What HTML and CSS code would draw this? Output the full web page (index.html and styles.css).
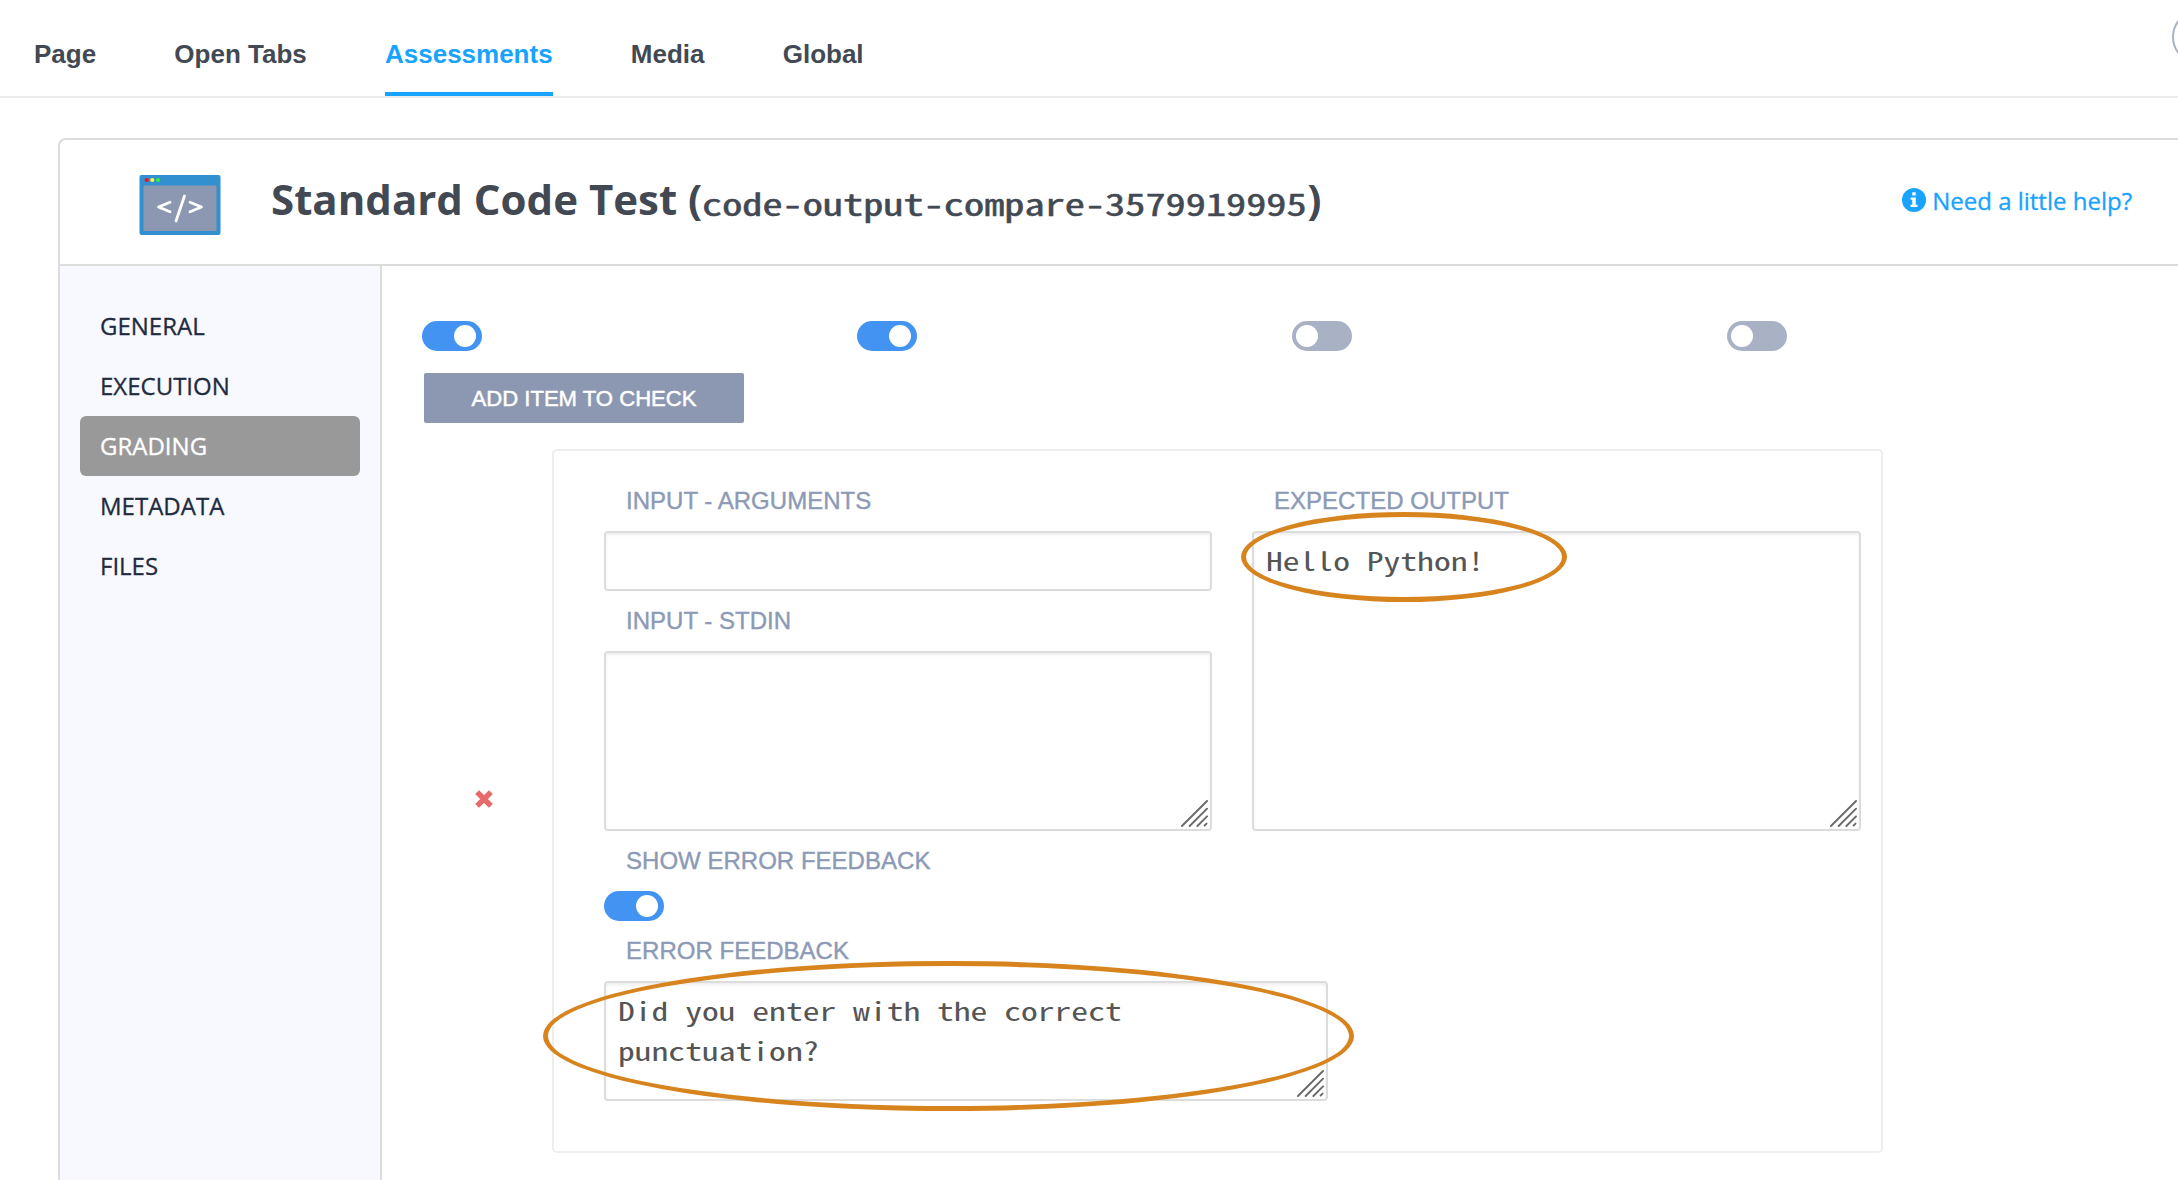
FILE: index.html
```html
<!DOCTYPE html>
<html lang="en">
<head>
<meta charset="utf-8">
<title>Assessments</title>
<link rel="stylesheet" href="styles.css">
</head>
<body>
<svg class="defs" aria-hidden="true">
  <symbol id="grip" viewBox="0 0 28 28">
    <path d="M1 27 27 1M9 27 27 9M17 27 27 17M24.5 26.5 26.5 24.5" fill="none" stroke="#6b6b6b" stroke-width="2" stroke-linecap="round"/>
  </symbol>
</svg>
<nav class="tabs">
  <a class="tab">Page</a>
  <a class="tab">Open Tabs</a>
  <a class="tab tab-active">Assessments</a>
  <a class="tab">Media</a>
  <a class="tab">Global</a>
  <span class="round-button"></span>
</nav>
<main class="card">
  <header class="card-header">
    <svg class="code-icon" viewBox="0 0 82 60">
      <rect x=".5" width="81" height="60" rx="2" fill="#3390d0"/>
      <rect x="4.500" y="10.500" width="73" height="45.500" fill="#8c97b1"/>
      <circle cx="7.700" cy="5" r="2.100" fill="#f01020"/>
      <circle cx="13.300" cy="5" r="2.100" fill="#fbf33c"/>
      <circle cx="19" cy="5" r="2.100" fill="#2cf23c"/>
      <path d="M31 27.200 19.500 32 31 36.800M51 27.200 62.500 32 51 36.800M45.500 21 37 46" fill="none" stroke="#fff" stroke-width="2.800" stroke-linecap="round" stroke-linejoin="round"/>
    </svg>
    <h1 class="title">Standard Code Test (<span class="title-id">code-output-compare-3579919995</span>)</h1>
    <a class="help">
      <svg class="help-icon" viewBox="0 0 24 24">
        <circle cx="12" cy="12" r="12" fill="#18a3fe"/>
        <path d="M10.300 4.200h3.400v3.200h-3.400zM8.600 9.400h5.200v7.400h1.700v2.300H8.600v-2.300h1.700v-5.100H8.600z" fill="#fff"/>
      </svg>
      <span class="help-text">Need a little help?</span>
    </a>
  </header>
  <div class="card-body">
    <aside class="sidebar">
      <a class="side-item">GENERAL</a>
      <a class="side-item">EXECUTION</a>
      <a class="side-item side-active">GRADING</a>
      <a class="side-item">METADATA</a>
      <a class="side-item">FILES</a>
    </aside>
    <section class="content">
      <div class="switches">
        <span class="switch switch-on"></span>
        <span class="switch switch-on"></span>
        <span class="switch"></span>
        <span class="switch"></span>
      </div>
      <button class="add-button"><span class="add-label">ADD ITEM TO CHECK</span></button>
      <div class="check-row">
        <svg class="remove" viewBox="0 0 18 18"><path d="M4 4 14 14M14 4 4 14" stroke="#ea6a6a" stroke-width="5.400" stroke-linecap="square"/></svg>
        <div class="panel">
          <div class="columns">
            <div class="column">
              <div class="label"><span>INPUT - ARGUMENTS</span></div>
              <div class="field field-line"></div>
              <div class="label"><span>INPUT - STDIN</span></div>
              <div class="field field-stdin"><svg class="grip"><use href="#grip"/></svg></div>
            </div>
            <div class="column">
              <div class="label"><span>EXPECTED OUTPUT</span></div>
              <div class="field field-output"><span class="code">Hello Python!</span><svg class="grip"><use href="#grip"/></svg></div>
            </div>
          </div>
          <div class="label"><span>SHOW ERROR FEEDBACK</span></div>
          <span class="switch switch-on"></span>
          <div class="label"><span>ERROR FEEDBACK</span></div>
          <div class="field field-feedback"><span class="code">Did you enter with the correct</span><span class="code">punctuation?</span><svg class="grip"><use href="#grip"/></svg></div>
          <span class="ring ring-output"></span>
          <span class="ring ring-feedback"></span>
        </div>
      </div>
    </section>
  </div>
</main>
</body>
</html>
```
FILE: styles.css
```css
* { box-sizing: border-box; }
body {
  margin: 0;
  height: 1180px;
  overflow: hidden;
  background: #fff;
  font-family: "Open Sans", sans-serif;
  color: #424953;
}
.defs { display: none; }
.tabs {
  position: relative;
  display: flex;
  gap: 78.200px;
  height: 98px;
  padding-left: 34px;
  border-bottom: 2px solid #ececec;
  font: bold 26px/30px "Liberation Sans", Arial, sans-serif;
  overflow: hidden;
}
.tab { height: 96px; padding-top: 39px; white-space: nowrap; }
.tab-active { color: #18a3fe; border-bottom: 4px solid #18a3fe; }
.round-button {
  position: absolute;
  left: 2172px;
  top: 10px;
  width: 54px;
  height: 54px;
  border: 2px solid #a9b1c8;
  border-radius: 50%;
}
.card {
  margin: 40px 0 0 58px;
  height: 1100px;
  border: 2px solid #dcdcdc;
  border-right: 0;
  border-radius: 8px 0 0 0;
}
.card-header {
  display: flex;
  align-items: flex-start;
  height: 126px;
  padding: 35px 46px 0 79px;
  border-bottom: 2px solid #dcdcdc;
}
.code-icon { width: 82px; height: 60px; flex: none; }
.title {
  margin: -6px 0 0 50px;
  font-size: 42px;
  line-height: 60px;
  font-weight: 700;
  white-space: nowrap;
}
.title-id {
  display: inline-block;
  width: 605px;
  font-family: "Noto Sans Mono CJK SC", "DejaVu Sans Mono", monospace;
  font-weight: 400;
  font-size: 30.240px;
  line-height: 40px;
  transform: translateY(1px) scaleX(1.3333);
  transform-origin: 0 50%;
  -webkit-text-stroke: .5px currentColor;
}
.help { display: flex; margin-left: auto; margin-top: 13px; color: #18a3fe; }
.help-icon { width: 24px; height: 24px; }
.help-text {
  margin: -5px 0 0 6px;
  font-size: 24px;
  line-height: 36px;
  white-space: nowrap;
  -webkit-text-stroke: .3px currentColor;
}
.card-body { display: flex; height: 914px; }
.sidebar {
  width: 322px;
  padding: 30px 20px 0;
  background: #f8f9fe;
  border-right: 2px solid #dcdcdc;
}
.side-item {
  display: block;
  height: 60px;
  padding-left: 20px;
  border-radius: 6px;
  font-size: 24px;
  line-height: 60px;
  color: #1f2b40;
  -webkit-text-stroke: .3px currentColor;
}
.side-active { background: #999; color: #fff; }
.content { flex: 1; padding: 55px 0 0 40px; }
.switches { display: flex; gap: 375px; }
.switch {
  display: block;
  flex: none;
  width: 60px;
  height: 30px;
  padding: 4px;
  border-radius: 15px;
  background: #a9b1c5;
}
.switch::before {
  content: "";
  display: block;
  width: 22px;
  height: 22px;
  border-radius: 50%;
  background: #fff;
}
.switch-on { background: #4394f2; padding-left: 32px; }
.add-button {
  display: block;
  width: 320px;
  height: 50px;
  margin: 22px 0 26px 2px;
  padding: 1px 0 0;
  border: 0;
  border-radius: 2px;
  background: #8c97b1;
  color: #fff;
  font: 22.100px/50px "Liberation Sans", Arial, sans-serif;
  -webkit-text-stroke: .5px currentColor;
}
.check-row { display: flex; align-items: center; }
.remove { width: 18px; height: 18px; margin: 0 59px 0 53px; position: relative; top: -2px; }
.panel {
  position: relative;
  width: 1331px;
  height: 704px;
  padding: 20px 20px 0 50px;
  border: 2px solid #eee;
  border-radius: 5px;
}
.columns { display: flex; justify-content: space-between; }
.column { width: 608px; }
.column + .column { width: 609px; }
.label {
  height: 60px;
  padding-left: 22px;
  font: 24px/60px "Liberation Sans", Arial, sans-serif;
  letter-spacing: .02px;
  color: #8c9ab5;
  -webkit-text-stroke: .4px currentColor;
}
.field {
  position: relative;
  padding: 7px 12px;
  border: 2px solid #dcdcdc;
  border-radius: 4px;
  box-shadow: inset 0 2px 3px rgba(0, 0, 0, .07);
  color: #555;
}
.code {
  display: block;
  width: 504px;
  font: 25.200px/40px "Noto Sans Mono CJK SC", "DejaVu Sans Mono", monospace;
  white-space: nowrap;
  transform: scaleX(1.3333);
  transform-origin: 0 50%;
}
.field-line { height: 60px; }
.field-stdin { height: 180px; }
.field-output { height: 300px; }
.field-feedback { width: 724px; height: 120px; }
.grip { position: absolute; right: 2px; bottom: 2px; width: 27px; height: 27px; }
.ring { position: absolute; border: 5px solid #d7841e; border-radius: 50%; }
.ring-output { left: 687px; top: 61px; width: 326px; height: 90px; }
.ring-feedback { left: -11px; top: 510px; width: 811px; height: 150px; }
```
